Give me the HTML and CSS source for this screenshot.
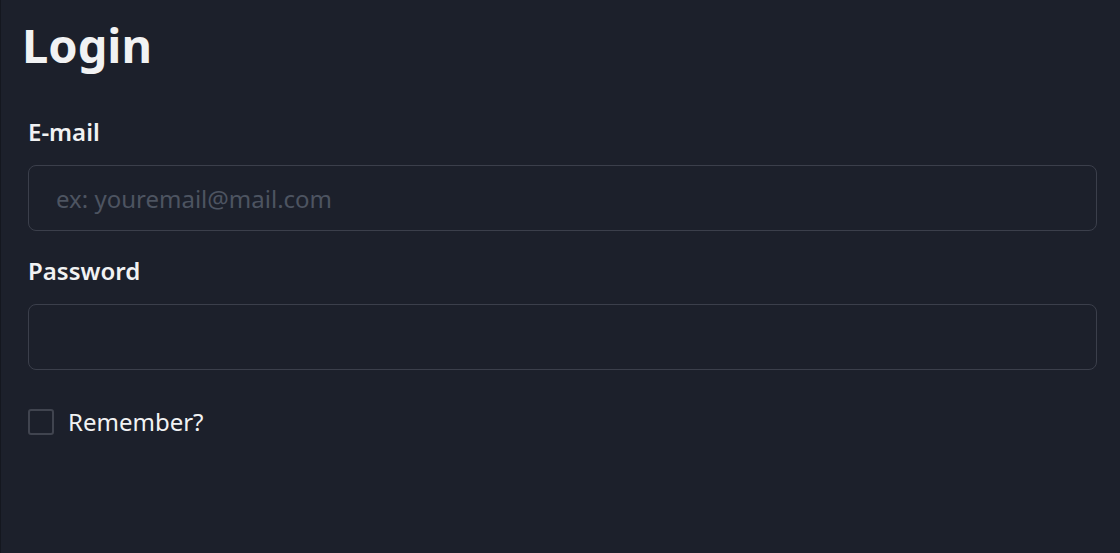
FILE: index.html
```html
<!DOCTYPE html>
<html lang="en">
<head>
    <meta charset="UTF-8">
    <meta name="viewport" content="width=device-width, initial-scale=1.0">
    <title>Login</title>
    <link rel="stylesheet" href="styles.css">
</head>
<body>
    <div class="page">
        <h1 class="title">Login</h1>

        <form class="login-form">
            <div class="field">
                <label for="email">E-mail</label>
                <input type="text" id="email" class="text-input" placeholder="ex: youremail@mail.com">
            </div>
            <div class="field">
                <label for="password">Password</label>
                <input type="password" id="password" class="text-input">
            </div>
            <label class="remember">
                <span class="checkbox"></span>
                <span>Remember?</span>
            </label>
        </form>
    </div>
</body>
</html>
```

FILE: styles.css
```css
:root {
    --bg: #1c202b;
    --edge: #14171f;
    --text: #f1f2f3;
    --border: #3b3f4b;
    --muted: #4d5461;
}

* {
    margin: 0;
    padding: 0;
    box-sizing: border-box;
    font-family: 'Segoe UI', 'Noto Sans', 'Open Sans', sans-serif;
}

html, body {
    height: 100%;
}

body {
    background: var(--bg);
    color: var(--text);
    border-left: 1px solid var(--edge);
}

.page {
    padding: 13px 23px 0 21px;
}

.title {
    font-size: 47px;
    font-weight: 700;
    line-height: 64px;
}

.login-form {
    display: flex;
    flex-direction: column;
    margin-top: 39px;
    padding-left: 6px;
}

.field {
    display: flex;
    flex-direction: column;
    gap: 17px;
    margin-bottom: 24px;
}

.field label {
    font-size: 24px;
    font-weight: 600;
    line-height: 32px;
}

.text-input {
    width: 100%;
    height: 66px;
    padding: 0 27px;
    font-size: 24px;
    color: var(--text);
    background: transparent;
    border: 1px solid var(--border);
    border-radius: 8px;
    outline: none;
}

.text-input::placeholder {
    color: var(--muted);
}

.remember {
    display: flex;
    align-items: center;
    gap: 14px;
    margin-top: 12px;
    font-size: 24px;
    line-height: 32px;
}

.checkbox {
    width: 26px;
    height: 26px;
    border: 2px solid #40444f;
    border-radius: 3px;
}
```
